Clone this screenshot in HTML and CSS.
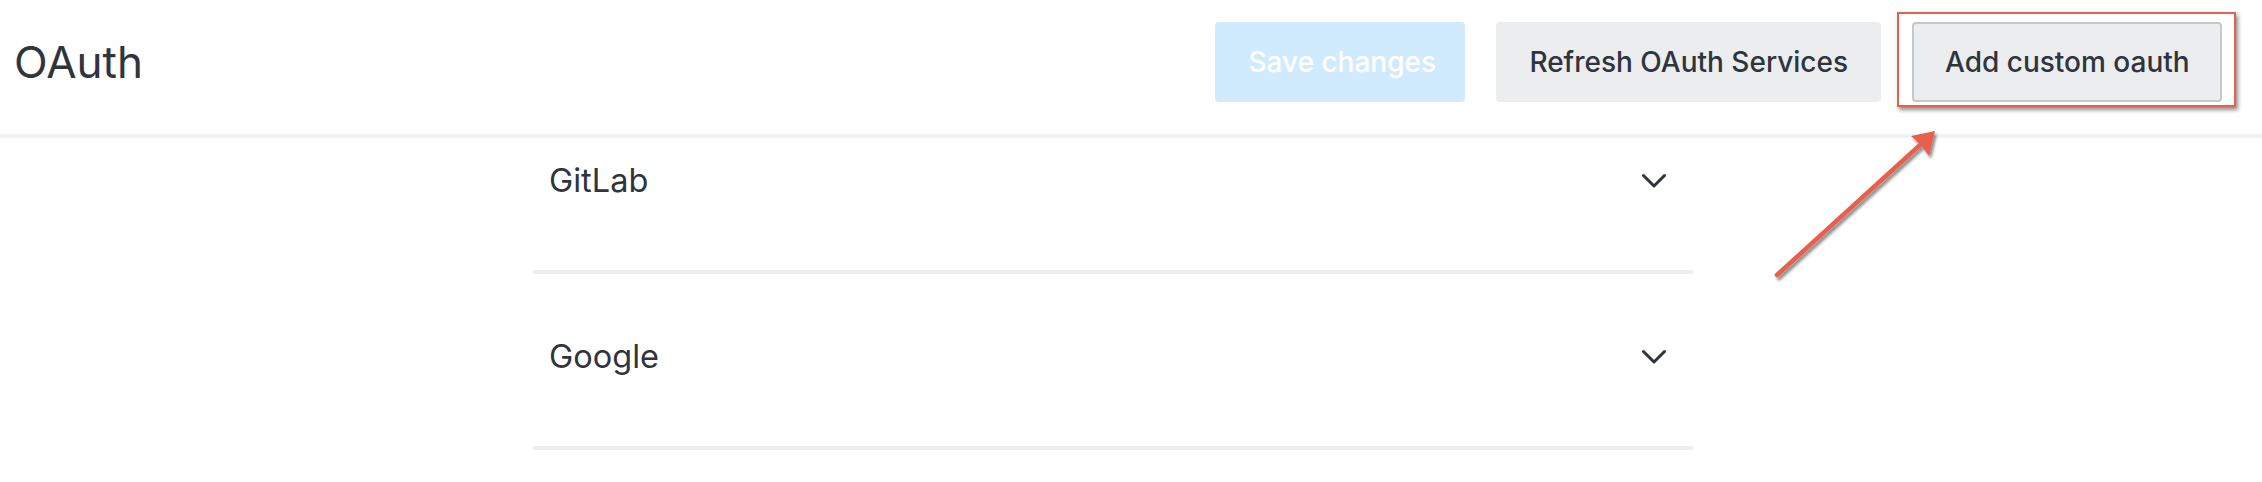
FILE: index.html
```html
<!DOCTYPE html>
<html lang="en">
<head>
<meta charset="utf-8">
<title>OAuth</title>
<link rel="stylesheet" href="styles.css">
</head>
<body>
<div class="page">
  <header class="page-header">
    <h1 class="page-title">OAuth</h1>
    <div class="actions">
      <button class="btn btn-primary" disabled>Save changes</button>
      <button class="btn btn-secondary">Refresh OAuth Services</button>
      <div class="highlight">
        <button class="btn btn-secondary btn-focused">Add custom oauth</button>
      </div>
    </div>
  </header>
  <main class="content">
    <div class="accordion">
      <section class="accordion-item">
        <div class="accordion-title">
          <span class="accordion-label">GitLab</span>
          <svg class="chevron" viewBox="0 0 32 32" width="32" height="32"><path d="M5.5 10.5 L16 21 L26.5 10.5" fill="none" stroke="#2f343d" stroke-width="3" stroke-linecap="round" stroke-linejoin="round"/></svg>
        </div>
      </section>
      <section class="accordion-item">
        <div class="accordion-title">
          <span class="accordion-label">Google</span>
          <svg class="chevron" viewBox="0 0 32 32" width="32" height="32"><path d="M5.5 10.5 L16 21 L26.5 10.5" fill="none" stroke="#2f343d" stroke-width="3" stroke-linecap="round" stroke-linejoin="round"/></svg>
        </div>
      </section>
    </div>
  </main>
  <svg class="annotation-arrow" width="2262" height="482" viewBox="0 0 2262 482">
    <defs>
      <filter id="sh" x="-20%" y="-20%" width="140%" height="140%">
        <feDropShadow dx="2" dy="3" stdDeviation="1.6" flood-color="#000" flood-opacity="0.45"/>
      </filter>
    </defs>
    <g filter="url(#sh)">
      <line x1="1777" y1="275" x2="1920" y2="145" stroke="#e8604c" stroke-width="4.5" stroke-linecap="round"/>
      <path d="M1935 131 L1911 136 L1921 145 L1929 156 Z" fill="#e8604c"/>
    </g>
  </svg>
</div>
</body>
</html>
```
FILE: styles.css
```css
* { box-sizing: border-box; }

html, body {
  margin: 0;
  padding: 0;
  background: #ffffff;
}

body {
  font-family: Inter, "Noto Sans", "Liberation Sans", sans-serif;
  color: #2f343d;
  width: 2262px;
  height: 482px;
  overflow: hidden;
}

.page {
  position: relative;
  display: flex;
  flex-direction: column;
  height: 482px;
}

.page-header {
  display: flex;
  align-items: center;
  justify-content: space-between;
  height: 138px;
  padding: 22px 40px 32px 14px;
  border-bottom: 4px solid #f1f2f4;
  flex: none;
}

.page-title {
  margin: 0;
  font-size: 44px;
  font-weight: 400;
  line-height: 80px;
  color: #2f343d;
}

.actions {
  display: flex;
  align-items: center;
  gap: 31px;
}

.btn {
  height: 80px;
  padding: 0 31px;
  border: 2px solid transparent;
  border-radius: 4px;
  font-family: Inter, "Noto Sans", "Liberation Sans", sans-serif;
  font-size: 28px;
  font-weight: 500;
  line-height: 1;
  cursor: pointer;
  white-space: nowrap;
}

.btn-primary {
  background: #d1ebfe;
  color: #ffffff;
  width: 250px;
}

.btn-secondary {
  background: #ebedef;
  color: #2f343d;
}

.btn-focused {
  border-color: #c6c9cc;
  width: 310px;
}

.highlight {
  position: relative;
  display: flex;
}

.highlight::after {
  content: "";
  position: absolute;
  left: -15px;
  right: -14px;
  top: -10px;
  bottom: -5px;
  border: 2.5px solid #e8604c;
  box-shadow: 2px 3px 4px rgba(0, 0, 0, 0.45);
  pointer-events: none;
}

.content {
  flex: 1;
  overflow: hidden;
  padding-left: 533px;
}

.accordion {
  width: 1160px;
  margin-top: -40px;
}

.accordion-item {
  height: 176px;
  padding: 59px 23px 0 16px;
  border-bottom: 4px solid #eeeff1;
}

.accordion-title {
  display: flex;
  align-items: center;
  justify-content: space-between;
  height: 48px;
}

.accordion-label {
  font-size: 32.5px;
  font-weight: 400;
  line-height: 48px;
  color: #2f343d;
}

.chevron {
  display: block;
  flex: none;
}

.annotation-arrow {
  position: absolute;
  left: 0;
  top: 0;
  pointer-events: none;
}
```
